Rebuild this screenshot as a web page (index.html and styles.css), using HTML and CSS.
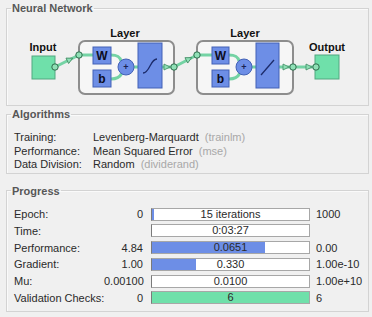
FILE: index.html
```html
<!DOCTYPE html>
<html lang="en">
<head>
  <meta charset="UTF-8" />
  <title>Neural Network Training</title>
  <link rel="stylesheet" href="styles.css">
</head>
<body>
  <div class="panel">
    <fieldset class="group group-net">
      <legend>Neural Network</legend>
      <svg class="diagram" width="361" height="90" viewBox="7 15 361 90">
        <defs>
          <g id="node"><circle r="3.2" fill="#8fe0b6" stroke="#2e6b4c" stroke-width="1"/></g>
          <g id="arrow"><path d="M-3,-3 L3,0 L-3,3 Z" fill="#8fe0b6" stroke="#3f8a62" stroke-width="0.8"/></g>
        </defs>

        <!-- labels -->
        <text x="43" y="51" class="lbl">Input</text>
        <text x="327" y="51" class="lbl">Output</text>
        <text x="125" y="37" class="lbl">Layer</text>
        <text x="245" y="37" class="lbl">Layer</text>

        <!-- layer frames -->
        <rect x="79" y="41" width="95" height="53" rx="6" class="frame"/>
        <rect x="197" y="41" width="96" height="53" rx="6" class="frame"/>

        <!-- wires -->
        <g class="wire">
          <path d="M55,67 L79,55"/>
          <path d="M79,55 L93,55"/>
          <path d="M111,55 C118,55 120,57 121,61"/>
          <path d="M111,79 C117,79 120,77 122,73"/>
          <path d="M134,67 L138,67"/>
          <path d="M162,67 L174,67"/>
          <path d="M174,67 L197,55"/>
          <path d="M197,55 L212,55"/>
          <path d="M229,55 C236,55 238,57 239,61"/>
          <path d="M229,79 C235,79 238,77 240,73"/>
          <path d="M252,67 L256,67"/>
          <path d="M279,67 L293,67"/>
          <path d="M293,67 L316,67"/>
        </g>

        <!-- input / output -->
        <rect x="32" y="56" width="23" height="23" class="io"/>
        <rect x="315" y="55" width="24" height="24" class="io"/>

        <!-- layer 1 -->
        <rect x="93" y="47" width="18" height="17" class="blk"/>
        <text x="102" y="60" class="sym">W</text>
        <rect x="93" y="70" width="18" height="17" class="blk"/>
        <text x="102" y="83" class="sym">b</text>
        <circle cx="126" cy="67" r="8" class="blk"/>
        <text x="126" y="70" class="plus">+</text>
        <rect x="138" y="43" width="24" height="45" class="blk"/>
        <path d="M143,73 C150,73 150,59 157,59" class="curve"/>

        <!-- layer 2 -->
        <rect x="212" y="47" width="17" height="17" class="blk"/>
        <text x="220.5" y="60" class="sym">W</text>
        <rect x="212" y="70" width="17" height="17" class="blk"/>
        <text x="220.5" y="83" class="sym">b</text>
        <circle cx="244" cy="67" r="8" class="blk"/>
        <text x="244" y="70" class="plus">+</text>
        <rect x="256" y="43" width="23" height="45" class="blk"/>
        <path d="M261,75 L274,60" class="curve"/>

        <!-- arrows and joints -->
        <use href="#node" x="55" y="67"/>
        <use href="#arrow" x="0" y="0" transform="translate(70,59.5) rotate(-26)"/>
        <use href="#node" x="79" y="55"/>
        <use href="#arrow" x="0" y="0" transform="translate(167,67)"/>
        <use href="#node" x="174" y="67"/>
        <use href="#arrow" x="0" y="0" transform="translate(189,59) rotate(-27)"/>
        <use href="#node" x="197" y="55"/>
        <use href="#arrow" x="0" y="0" transform="translate(286,67)"/>
        <use href="#node" x="293" y="67"/>
        <use href="#arrow" x="0" y="0" transform="translate(309,67)"/>
        <use href="#node" x="316" y="67"/>
      </svg>
    </fieldset>

    <fieldset class="group group-algo">
      <legend>Algorithms</legend>
      <div class="algo">
        <span>Training:</span>
        <span>Levenberg-Marquardt <em>(trainlm)</em></span>
        <span>Performance:</span>
        <span>Mean Squared Error <em>(mse)</em></span>
        <span>Data Division:</span>
        <span>Random <em>(dividerand)</em></span>
      </div>
    </fieldset>

    <fieldset class="group group-progress">
      <legend>Progress</legend>
      <div class="progress">
        <span>Epoch:</span>
        <span class="num">0</span>
        <div class="cell"><div class="bar"><div class="fill" style="width: 1.5%"></div><span>15 iterations</span></div></div>
        <span class="max">1000</span>

        <span>Time:</span>
        <span class="num"></span>
        <div class="cell"><div class="bar"><span>0:03:27</span></div></div>
        <span class="max"></span>

        <span>Performance:</span>
        <span class="num">4.84</span>
        <div class="cell"><div class="bar"><div class="fill" style="width: 72%"></div><span>0.0651</span></div></div>
        <span class="max">0.00</span>

        <span>Gradient:</span>
        <span class="num">1.00</span>
        <div class="cell"><div class="bar"><div class="fill" style="width: 28%"></div><span>0.330</span></div></div>
        <span class="max">1.00e-10</span>

        <span>Mu:</span>
        <span class="num">0.00100</span>
        <div class="cell"><div class="bar"><span>0.0100</span></div></div>
        <span class="max">1.00e+10</span>

        <span>Validation Checks:</span>
        <span class="num">0</span>
        <div class="cell"><div class="bar"><div class="fill green" style="width: 100%"></div><span>6</span></div></div>
        <span class="max">6</span>
      </div>
    </fieldset>
  </div>
</body>
</html>
```

FILE: styles.css
```css
body {
  margin: 0;
  background: #f0f0f0;
  font-family: "Liberation Sans", Arial, sans-serif;
  font-size: 11px;
  color: #2a2a2a;
}

.panel {
  padding: 1px 0 0 6px;
  display: flex;
  flex-direction: column;
}

.group {
  width: 363px;
  box-sizing: border-box;
  margin: 0;
  padding: 0;
  border: 1px solid #d3d3d3;
  box-shadow: inset 1px 1px 0 #fafafa;
}

.group legend {
  margin-left: 4px;
  padding: 0 1px;
  font-weight: bold;
  color: #575757;
  line-height: 14px;
}

.group-algo {
  margin-top: 1px;
}

.group-progress {
  margin-top: 10px;
}

.diagram {
  display: block;
}

.diagram .lbl {
  font-family: "Liberation Sans", Arial, sans-serif;
  font-size: 11px;
  font-weight: bold;
  fill: #111;
  text-anchor: middle;
}

.diagram .frame {
  fill: #f6f6f6;
  stroke: #8d8d8d;
  stroke-width: 2;
}

.diagram .wire path {
  fill: none;
  stroke: #74d3a4;
  stroke-width: 3;
}

.diagram .io {
  fill: #6fe0aa;
  stroke: #52a880;
  stroke-width: 1;
}

.diagram .blk {
  fill: #6d8ee6;
  stroke: #4261b6;
  stroke-width: 1;
}

.diagram .sym {
  font-family: "Liberation Sans", Arial, sans-serif;
  font-size: 12px;
  font-weight: bold;
  fill: #0c0c20;
  text-anchor: middle;
}

.diagram .plus {
  font-family: "Liberation Sans", Arial, sans-serif;
  font-size: 9px;
  font-weight: bold;
  fill: #1a2250;
  text-anchor: middle;
}

.diagram .curve {
  fill: none;
  stroke: #1c2b6a;
  stroke-width: 1.3;
}

.algo {
  display: grid;
  grid-template-columns: 79px 1fr;
  padding: 10px 0 1px 7px;
  line-height: 13.5px;
}

.algo em {
  font-style: normal;
  color: #a8a8a8;
  margin-left: 3px;
}

.progress {
  display: grid;
  grid-template-columns: 90px 39px 167px 1fr;
  grid-auto-rows: 13px;
  row-gap: 3.8px;
  align-items: center;
  padding: 10px 0 7px 7px;
  white-space: nowrap;
}

.progress .num {
  text-align: right;
}

.progress .cell {
  padding-left: 8px;
}

.progress .max {
  padding-left: 6px;
}

.bar {
  position: relative;
  height: 13px;
  box-sizing: border-box;
  background: #fff;
  border: 1px solid #a7a7a7;
  border-left-color: #7a7a7a;
  text-align: center;
  line-height: 11px;
  overflow: hidden;
}

.bar .fill {
  position: absolute;
  left: 0;
  top: 0;
  bottom: 0;
  background: #6d8ee6;
}

.bar .fill.green {
  background: #6fe0aa;
}

.bar span {
  position: relative;
}
```
